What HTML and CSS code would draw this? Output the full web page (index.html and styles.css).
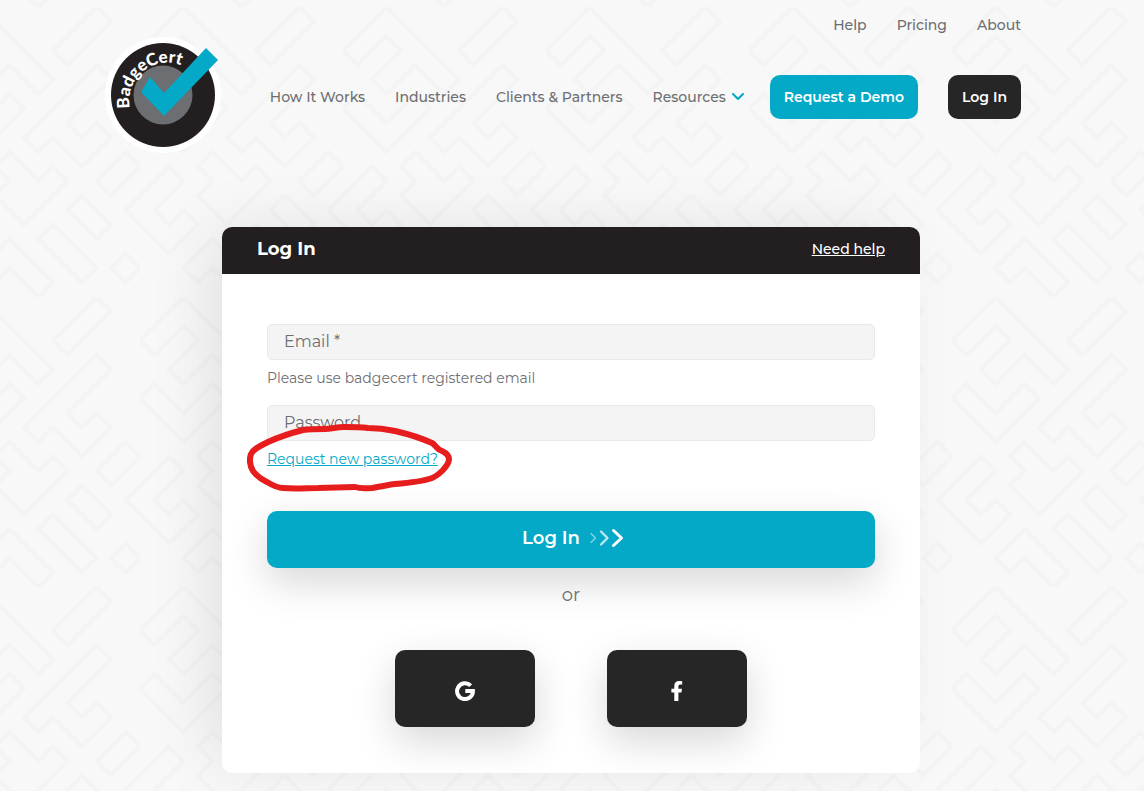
FILE: index.html
```html
<!DOCTYPE html>
<html lang="en">
<head>
<meta charset="UTF-8">
<meta name="viewport" content="width=device-width, initial-scale=1.0">
<title>Log In - BadgeCert</title>
<link rel="stylesheet" href="styles.css">
</head>
<body>
<header class="header">
  <nav class="top-nav">
    <a href="#">Help</a>
    <a href="#">Pricing</a>
    <a href="#">About</a>
  </nav>

  <div class="header-row">
    <a class="logo" href="#" aria-label="BadgeCert">
      <svg width="116" height="116" viewBox="0 0 116 116">
        <circle cx="58" cy="58" r="58" fill="#fff"/>
        <circle cx="58" cy="58" r="52" fill="#231f20"/>
        <circle cx="58" cy="58" r="29.5" fill="#6d6e71"/>
        <path id="logoArc" d="M25 71 A38 38 0 0 1 92 40" fill="none"/>
        <text class="logo-text"><textPath href="#logoArc">BadgeCert</textPath></text>
        <path d="M45 40 L36 55 L59 79 L113 23 L101 11 L59 56 Z" fill="#03a9c6"/>
      </svg>
    </a>

    <nav class="main-nav">
      <a href="#">How It Works</a>
      <a href="#">Industries</a>
      <a href="#">Clients &amp; Partners</a>
      <a href="#" class="has-menu">Resources
        <svg width="12" height="8" viewBox="0 0 12 8"><path d="M1 1 L6 6 L11 1" fill="none" stroke="#03a9c6" stroke-width="2" stroke-linecap="round" stroke-linejoin="round"/></svg>
      </a>
      <div class="nav-buttons">
        <a href="#" class="btn btn-demo">Request a Demo</a>
        <a href="#" class="btn btn-login">Log In</a>
      </div>
    </nav>
  </div>
</header>

<main class="card">
  <div class="card-header">
    <h1>Log In</h1>
    <a href="#">Need help</a>
  </div>

  <form class="card-body">
    <div class="field">
      <label for="email">Email *</label>
      <input type="email" id="email" name="email" required>
    </div>
    <p class="hint">Please use badgecert registered email</p>

    <div class="field">
      <label for="password">Password</label>
      <input type="password" id="password" name="password">
    </div>
    <div class="hint reset">
      <a href="#">Request new password?</a>
      <!-- hand drawn circle -->
      <svg class="marker" width="206" height="70" viewBox="0 0 206 70">
        <path d="M97 4 C90 4 84 6 78 6 C70 6 64 6 56 7 C44 10 32 14 21 19 C13 23 6 26 4 31 C2 37 3 43 6 48 C9 52 14 56 20 59 C25 62 31 65 36 65 C48 66 60 65 71 65 L108 64 C114 66 119 65 125 65 C132 64 140 62 148 61 C161 60 174 59 185 55 C190 53 193 50 196 47 C199 43 202 41 202 36 C202 32 199 30 195 28 C189 26 189 22 185 20 C174 15 161 11 148 8 C139 6 130 5 121 5 C113 4 105 4 97 4 Z" fill="none" stroke="#e71c1c" stroke-width="6" stroke-linejoin="round"/>
      </svg>
    </div>

    <button type="submit" class="submit">
      Log In
      <svg width="36" height="20" viewBox="0 0 36 20" fill="none" stroke="#fff" stroke-linecap="round" stroke-linejoin="round">
        <path d="M3 5.500 L7.500 10 L3 14.500" stroke-width="1.500" opacity=".5"/>
        <path d="M13 3.500 L19.500 10 L13 16.500" stroke-width="2.300" opacity=".75"/>
        <path d="M25.500 2.500 L33.500 10 L25.500 17.500" stroke-width="3"/>
      </svg>
    </button>

    <p class="or">or</p>

    <div class="social">
      <button type="button" aria-label="Log in with Google">
        <svg width="20" height="20" viewBox="0 0 20 20"><path d="M15.700 4.700 A7.900 7.900 0 1 0 17.900 10 H10.300" fill="none" stroke="#fff" stroke-width="4"/></svg>
      </button>
      <button type="button" aria-label="Log in with Facebook">
        <svg width="12" height="20" viewBox="0 0 12 20"><path d="M3.300 20 V11.400 H.4 V7.700 H3.300 V5 C3.300 1.800 5.100 0 8.200 0 C9.500 0 11.200 .2 11.200 .2 V3.500 H9.500 C8 3.500 7.400 4.300 7.400 5.400 V7.700 H11 L10.400 11.400 H7.400 V20 Z" fill="#fff"/></svg>
      </button>
    </div>
  </form>
</main>
</body>
</html>
```

FILE: styles.css
```css
:root {
  --blue: #03a9c6;
  --dark: #262626;
  --black: #231f20;
  --gray: #6d6e71;
}

* {
  margin: 0;
  padding: 0;
  box-sizing: border-box;
}

body {
  font-family: Montserrat, Inter, sans-serif;
  font-size: 14px;
  line-height: 20px;
  color: var(--gray);
  min-height: 100vh;
  padding: 0 2px 18px 0;
  background-color: #f8f8f8;
  background-image: url("data:image/svg+xml,%3Csvg xmlns='http://www.w3.org/2000/svg' width='203' height='290' viewBox='0 0 14 20'%3E%3Cpath fill='none' stroke='%23f4f4f4' stroke-width='.3' stroke-linejoin='round' d='M3 0L0 3L1 4L3 2L4 3L2 5L3 6L5 4L7 6L8 5ZM3 8L5 6L6 7L3 10L0 7L1 6ZM11 4L6 9L7 10L8 9L10 11L12 9L11 8L10 9L9 8L12 5ZM5 10L4 11L5 12L4 13L6 15L9 12L8 11L7 12ZM10 13L9 14L11 16L12 15ZM8 15L7 16L10 19L11 18ZM2 11L3 12L1 14L2 15L3 14L4 15L2 17L-1 14ZM16 11L17 12L15 14L16 15L17 14L18 15L16 17L13 14ZM5 16L3 18L4 19L5 18L7 20L8 19ZM8 3L9 4L12 1L11 0ZM11 12L13 10L14 11L12 13ZM13 17L14 18L13 19L12 18Z'/%3E%3C/svg%3E");
  background-position: 140px 7px;
}

a {
  color: inherit;
}

svg {
  display: block;
}

/* Header */
.header {
  max-width: 900px;
  margin: 0 auto;
  padding-top: 15px;
  font-weight: 500;
}

.header a {
  text-decoration: none;
}

.top-nav {
  display: flex;
  justify-content: flex-end;
  gap: 30px;
}

.header-row {
  display: flex;
  align-items: center;
  justify-content: space-between;
  margin: 2px 0 74px -16px;
}

.logo-text {
  font-family: Lato, sans-serif;
  font-size: 17px;
  font-weight: 900;
  fill: #fff;
}

.main-nav {
  display: flex;
  align-items: center;
  gap: 30px;
  padding-top: 4px;
  white-space: nowrap;
}

.has-menu {
  display: flex;
  align-items: center;
  gap: 6px;
}

.nav-buttons {
  display: flex;
  gap: 30px;
  margin-left: -4px;
}

.btn {
  padding: 12px 14px;
  border-radius: 10px;
  color: #fff;
  font-weight: 600;
}

.btn-demo {
  background: var(--blue);
}

.btn-login {
  background: var(--dark);
}

/* Login card */
.card {
  max-width: 698px;
  margin: 0 auto;
  background: #fff;
  border-radius: 10px;
  box-shadow: -20px -5px 60px -10px rgba(0, 0, 0, 0.1);
}

.card-header {
  display: flex;
  align-items: center;
  justify-content: space-between;
  padding: 10px 35px 13px;
  background: var(--black);
  border-radius: 10px 10px 0 0;
  color: #fff;
}

.card-header h1 {
  font-size: 18px;
  line-height: 24px;
  font-weight: 700;
}

.card-header a {
  font-weight: 500;
}

.card-body {
  padding: 50px 45px 46px;
}

.field {
  position: relative;
}

.field input {
  display: block;
  width: 100%;
  height: 36px;
  padding: 0 16px;
  background: #f4f4f4;
  border: 1px solid #e9e9e9;
  border-radius: 5px;
  font: inherit;
  font-size: 16px;
}

/* label sits inside the empty input */
.field label {
  position: absolute;
  left: 17px;
  top: 8px;
  font-size: 16px;
}

.hint {
  margin: 8px 0 17px;
}

.reset {
  position: relative;
  margin-bottom: 42px;
}

.reset a {
  color: var(--blue);
}

.marker {
  position: absolute;
  left: -20px;
  top: -26px;
}

.submit {
  display: flex;
  align-items: center;
  justify-content: center;
  gap: 8px;
  width: 100%;
  padding: 17px 0 20px 4px;
  border: none;
  border-radius: 10px;
  background: var(--blue);
  box-shadow: 0 14px 40px rgba(0, 0, 0, 0.16);
  color: #fff;
  font: 600 18px/20px Montserrat, Inter, sans-serif;
  cursor: pointer;
}

.or {
  margin: 17px 0 45px;
  text-align: center;
  font-size: 18px;
}

.social {
  display: flex;
  justify-content: center;
  gap: 72px;
}

.social button {
  display: flex;
  align-items: center;
  justify-content: center;
  width: 140px;
  height: 77px;
  padding-top: 5px;
  border: none;
  border-radius: 10px;
  background: var(--dark);
  box-shadow: 0 14px 40px rgba(0, 0, 0, 0.16);
  cursor: pointer;
}
```
